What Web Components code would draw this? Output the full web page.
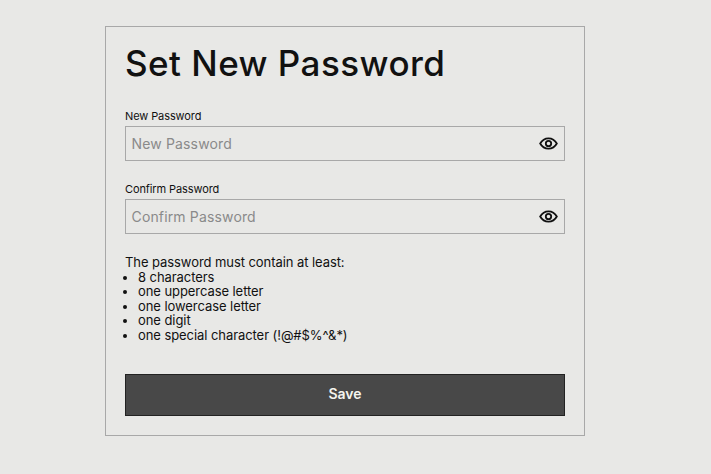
<!DOCTYPE html>
<html><head><meta charset="utf-8"><style>
html,body{margin:0;height:100%;background:#e8e8e6}
body{padding:26px 0 0 105px;box-sizing:border-box;font-family:Inter,"Liberation Sans",sans-serif;color:#111}
</style></head><body>
<template id="tf"><style>
:host{display:flex;flex-direction:column}
label{font-size:11px;line-height:13px;height:16px;color:#111;letter-spacing:-.1px}
.box{display:flex;align-items:center;height:35px;box-sizing:border-box;border:1px solid #a8a8a8;padding:0 6px 0 5.500px}
.ph{flex:1;font-size:14px;color:#8a8a8a;letter-spacing:.15px}
svg{width:19px;height:19px;display:block}
</style><label></label><div class="box"><span class="ph"></span>
<svg viewBox="0 0 24 24" fill="none" stroke="#111" stroke-width="2.300"><path d="M1.500 12C4 7.500 7.500 5.500 12 5.500S20 7.500 22.500 12C20 16.500 16.500 18.500 12 18.500S4 16.500 1.500 12Z"/><circle cx="12" cy="12" r="3.400"/></svg></div></template>
<template id="card"><style>
:host{display:flex;flex-direction:column;width:480px;height:410px;box-sizing:border-box;border:1px solid #a8a8a8;padding:0 19px}
h1{margin:15px 0 0;font-size:35px;line-height:42px;font-weight:500;color:#111;letter-spacing:.45px}
.fields{display:flex;flex-direction:column;gap:22px;margin-top:26px}
.rules{margin-top:21px;font-size:13px;line-height:14.500px;color:#111;letter-spacing:-.07px}
ul{margin:0;padding:0 0 0 13px}
.btn{margin-top:32px;height:42px;box-sizing:border-box;background:#484848;border:1px solid #222;color:#f4f4ee;font-size:14px;font-weight:600;padding-bottom:3px;display:flex;align-items:center;justify-content:center}
</style><h1>Set New Password</h1>
<div class="fields"><x-field label="New Password"></x-field><x-field label="Confirm Password"></x-field></div>
<div class="rules"><div>The password must contain at least:</div><ul><li>8 characters</li><li>one uppercase letter</li><li>one lowercase letter</li><li>one digit</li><li>one special character (!@#$%^&amp;*)</li></ul></div>
<div class="btn">Save</div></template>
<x-card></x-card>
<script>
customElements.define('x-field',class extends HTMLElement{connectedCallback(){const s=this.attachShadow({mode:'open'});s.append(document.getElementById('tf').content.cloneNode(true));const t=this.getAttribute('label');s.querySelector('label').textContent=t;s.querySelector('.ph').textContent=t;}});
customElements.define('x-card',class extends HTMLElement{connectedCallback(){this.attachShadow({mode:'open'}).append(document.getElementById('card').content.cloneNode(true));}});
</script></body></html>
